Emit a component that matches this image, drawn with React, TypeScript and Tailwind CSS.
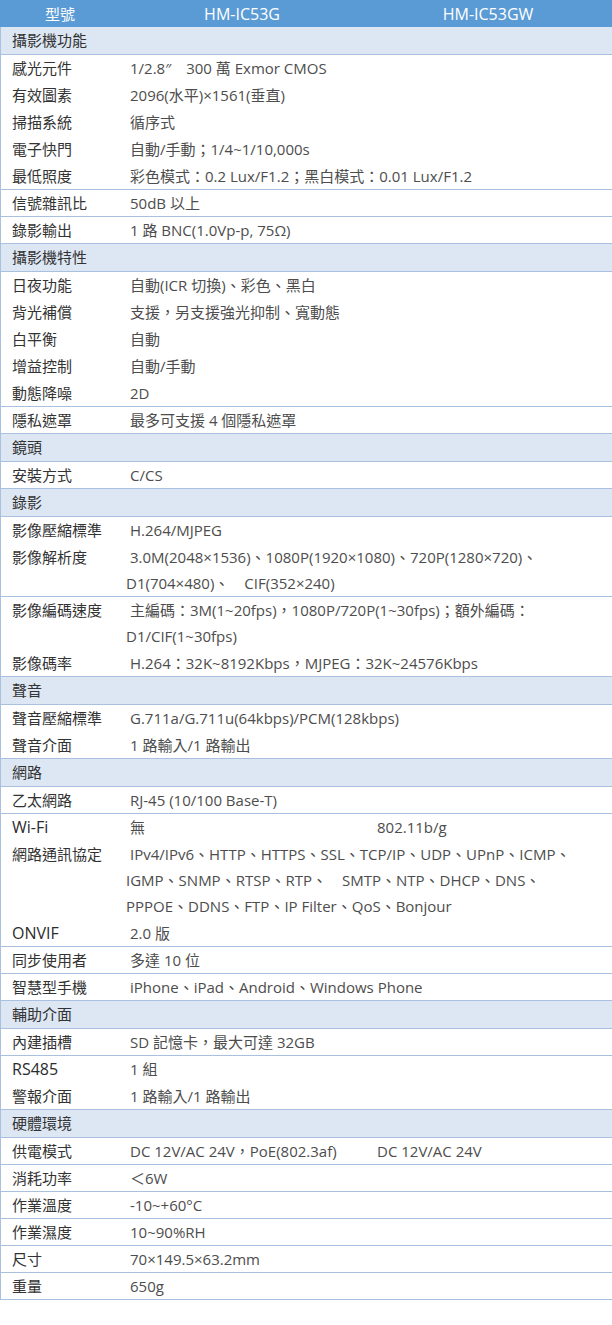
type Spec = {
  label?: string;
  section?: string;
  lines?: string[];
  extra?: string;
  line?: boolean;
  strong?: boolean;
};

const rows: Spec[] = [
  { section: '攝影機功能' },
  { label: '感光元件', lines: ['1/2.8″　300 萬 Exmor CMOS'] },
  { label: '有效圖素', lines: ['2096(水平)×1561(垂直)'] },
  { label: '掃描系統', lines: ['循序式'] },
  { label: '電子快門', lines: ['自動/手動；1/4~1/10,000s'] },
  { label: '最低照度', lines: ['彩色模式：0.2 Lux/F1.2；黑白模式：0.01 Lux/F1.2'], line: true },
  { label: '信號雜訊比', lines: ['50dB 以上'], line: true },
  { label: '錄影輸出', lines: ['1 路 BNC(1.0Vp-p, 75Ω)'], line: true },
  { section: '攝影機特性' },
  { label: '日夜功能', lines: ['自動(ICR 切換)、彩色、黑白'] },
  { label: '背光補償', lines: ['支援，另支援強光抑制、寬動態'] },
  { label: '白平衡', lines: ['自動'] },
  { label: '增益控制', lines: ['自動/手動'] },
  { label: '動態降噪', lines: ['2D'], line: true },
  { label: '隱私遮罩', lines: ['最多可支援 4 個隱私遮罩'], line: true },
  { section: '鏡頭' },
  { label: '安裝方式', lines: ['C/CS'], line: true },
  { section: '錄影' },
  { label: '影像壓縮標準', lines: ['H.264/MJPEG'] },
  { label: '影像解析度', lines: ['3.0M(2048×1536)、1080P(1920×1080)、720P(1280×720)、', 'D1(704×480)、　CIF(352×240)'], line: true },
  { label: '影像編碼速度', lines: ['主編碼：3M(1~20fps)，1080P/720P(1~30fps)；額外編碼：', 'D1/CIF(1~30fps)'] },
  { label: '影像碼率', lines: ['H.264：32K~8192Kbps，MJPEG：32K~24576Kbps'], line: true },
  { section: '聲音' },
  { label: '聲音壓縮標準', lines: ['G.711a/G.711u(64kbps)/PCM(128kbps)'] },
  { label: '聲音介面', lines: ['1 路輸入/1 路輸出'], line: true },
  { section: '網路' },
  { label: '乙太網路', lines: ['RJ-45 (10/100 Base-T)'], line: true },
  { label: 'Wi-Fi', lines: ['無'], extra: '802.11b/g', strong: true },
  { label: '網路通訊協定', lines: ['IPv4/IPv6、HTTP、HTTPS、SSL、TCP/IP、UDP、UPnP、ICMP、', 'IGMP、SNMP、RTSP、RTP、　SMTP、NTP、DHCP、DNS、', 'PPPOE、DDNS、FTP、IP Filter、QoS、Bonjour'] },
  { label: 'ONVIF', lines: ['2.0 版'], line: true, strong: true },
  { label: '同步使用者', lines: ['多達 10 位'], line: true },
  { label: '智慧型手機', lines: ['iPhone、iPad、Android、Windows Phone'], line: true },
  { section: '輔助介面' },
  { label: '內建插槽', lines: ['SD 記憶卡，最大可達 32GB'], line: true },
  { label: 'RS485', lines: ['1 組'], strong: true },
  { label: '警報介面', lines: ['1 路輸入/1 路輸出'], line: true },
  { section: '硬體環境' },
  { label: '供電模式', lines: ['DC 12V/AC 24V，PoE(802.3af)'], extra: 'DC 12V/AC 24V', line: true },
  { label: '消耗功率', lines: ['＜6W'], line: true },
  { label: '作業溫度', lines: ['-10~+60°C'], line: true },
  { label: '作業濕度', lines: ['10~90%RH'], line: true },
  { label: '尺寸', lines: ['70×149.5×63.2mm'], line: true },
  { label: '重量', lines: ['650g'], line: true },
];

const font = { fontFamily: '"Open Sans", "Noto Sans CJK TC", sans-serif' };

export default function App() {
  return (
    <div className="w-[612px] bg-white text-[15px] leading-[26px]" style={font}>
      <div className="flex h-[27px] items-center bg-[#5b9bd5] text-white">
        <div className="w-[120px] text-center">型號</div>
        <div className="w-[244px] text-center text-[16px]">HM-IC53G</div>
        <div className="flex-1 text-center text-[16px]">HM-IC53GW</div>
      </div>
      <div className="border-l border-[#a9c1de]">
        {rows.map((r, i) =>
          r.section ? (
            <div key={i} className="h-[28px] border-b border-[#a9c1de] bg-[#dde7f3] pl-[11px] leading-[27px] text-[#333]">{r.section}</div>
          ) : (
            <div key={i} className={`flex border-b ${r.line ? 'border-[#a9c1de]' : 'border-white'}`}>
              <div className={`w-[120px] shrink-0 pl-[11px] ${r.strong ? 'text-[16px] text-[#2b2b2b]' : 'text-[#333]'}`}>{r.label}</div>
              <div className={`${r.extra ? 'w-[246px]' : 'flex-1'} pl-[5px] whitespace-nowrap text-[#4d4d4d]`}>
                {r.lines!.map((t, j) => (
                  <div key={j} className={j === 0 ? 'pl-[4px]' : ''}>{t}</div>
                ))}
              </div>
              {r.extra && <div className="flex-1 pl-[10px] whitespace-nowrap text-[#4d4d4d]">{r.extra}</div>}
            </div>
          ),
        )}
      </div>
    </div>
  );
}
